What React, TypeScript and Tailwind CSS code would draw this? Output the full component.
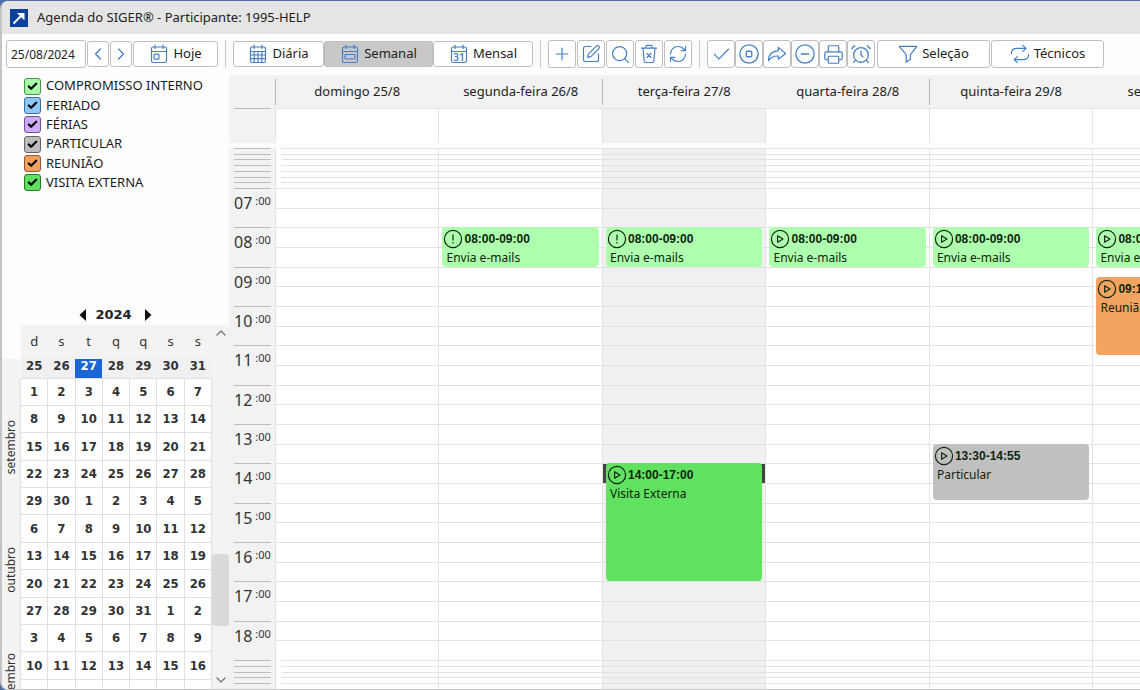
import type { ReactNode } from "react";
import { useState } from "react";
import clsx from "clsx";
import {
  AlarmClock,
  Check,
  ChevronDown,
  ChevronLeft,
  ChevronRight,
  ChevronUp,
  CircleMinus,
  CircleStop,
  Plus,
  Printer,
  RefreshCw,
  Search,
  SquarePen,
} from "lucide-react";

const FIRST_HOUR = 7;
const LAST_HOUR = 19;

const categories = [
  { name: "COMPROMISSO INTERNO", color: "bg-[#a9fca9] border-[#4c8f4c]" },
  { name: "FERIADO", color: "bg-[#8cc8fb] border-[#3c6e96]" },
  { name: "FÉRIAS", color: "bg-[#cdabfa] border-[#6f5296]" },
  { name: "PARTICULAR", color: "bg-[#bdbdbd] border-[#666666]" },
  { name: "REUNIÃO", color: "bg-[#f2a060] border-[#8f5a2c]" },
  { name: "VISITA EXTERNA", color: "bg-[#5fe060] border-[#2a7a2b]" },
];

const weekDays = ["d", "s", "t", "q", "q", "s", "s"];

const weeks = [
  [1, 2, 3, 4, 5, 6, 7],
  [8, 9, 10, 11, 12, 13, 14],
  [15, 16, 17, 18, 19, 20, 21],
  [22, 23, 24, 25, 26, 27, 28],
  [29, 30, 1, 2, 3, 4, 5],
  [6, 7, 8, 9, 10, 11, 12],
  [13, 14, 15, 16, 17, 18, 19],
  [20, 21, 22, 23, 24, 25, 26],
  [27, 28, 29, 30, 31, 1, 2],
  [3, 4, 5, 6, 7, 8, 9],
  [10, 11, 12, 13, 14, 15, 16],
];

type Appointment = {
  start: number;
  end: number;
  time: string;
  title: string;
  icon: "alert" | "play";
  color: string;
  selected?: boolean;
};

type Day = {
  label: string;
  divider?: boolean;
  today?: boolean;
  items: Appointment[];
};

function email(icon: "alert" | "play"): Appointment {
  return {
    start: 8,
    end: 9,
    time: "08:00-09:00",
    title: "Envia e-mails",
    icon,
    color: "bg-[#aeffae]",
  };
}

const days: Day[] = [
  { label: "domingo 25/8", divider: true, items: [] },
  { label: "segunda-feira 26/8", items: [email("alert")] },
  {
    label: "terça-feira 27/8",
    divider: true,
    today: true,
    items: [
      email("alert"),
      {
        start: 14,
        end: 17,
        time: "14:00-17:00",
        title: "Visita Externa",
        icon: "play",
        color: "bg-[#60e160]",
        selected: true,
      },
    ],
  },
  { label: "quarta-feira 28/8", items: [email("play")] },
  {
    label: "quinta-feira 29/8",
    divider: true,
    items: [
      email("play"),
      {
        start: 13.5,
        end: 14.92,
        time: "13:30-14:55",
        title: "Particular",
        icon: "play",
        color: "bg-[#c0c0c0]",
      },
    ],
  },
  {
    label: "sexta-feira 30/8",
    items: [
      email("play"),
      {
        start: 9.25,
        end: 11.25,
        time: "09:15-11:15",
        title: "Reunião",
        icon: "play",
        color: "bg-[#f4a460]",
      },
    ],
  },
];

function Glyph({ size = 20, children }: { size?: number; children: ReactNode }) {
  return (
    <svg
      width={size}
      height={size}
      viewBox="0 0 20 20"
      fill="none"
      stroke="currentColor"
      strokeWidth="1.2"
      strokeLinecap="round"
      strokeLinejoin="round"
      aria-hidden="true"
    >
      {children}
    </svg>
  );
}

function CalendarFrame({ children }: { children: ReactNode }) {
  return (
    <Glyph>
      <rect x="2.5" y="3" width="15" height="15.5" rx="1.8" />
      <path d="M2.5 7.5h15M6 1.2v3.3M14 1.2v3.3" />
      {children}
    </Glyph>
  );
}

function TodayIcon() {
  return (
    <CalendarFrame>
      <rect x="5" y="10.2" width="5" height="5" rx="1" />
    </CalendarFrame>
  );
}

function DayIcon() {
  return (
    <CalendarFrame>
      <path d="M6.2 7.5v11M10 7.5v11M13.8 7.5v11M2.5 11h15M2.5 14.7h15" />
    </CalendarFrame>
  );
}

function WeekIcon() {
  return (
    <CalendarFrame>
      <rect x="5" y="10.5" width="10" height="4.5" rx="0.8" />
    </CalendarFrame>
  );
}

function MonthIcon() {
  return (
    <CalendarFrame>
      <text
        x="10"
        y="16.7"
        textAnchor="middle"
        fontSize="10"
        fontFamily="Noto Sans, sans-serif"
        fill="currentColor"
        stroke="none"
        fontWeight="600"
      >
        31
      </text>
    </CalendarFrame>
  );
}

function DeleteIcon() {
  return (
    <Glyph>
      <path d="M2.5 4.2h15M7 4V2.3c0-.6.4-1 1-1h4c.6 0 1 .4 1 1V4M4 4.2l1.2 13c.1.8.6 1.3 1.4 1.3h6.8c.8 0 1.3-.5 1.4-1.3L16 4.2" />
      <path d="M8 9.5l4 4M12 9.5l-4 4" />
    </Glyph>
  );
}

function ForwardIcon() {
  return (
    <Glyph>
      <path d="M11.3 3.4L18.6 9.5L11.3 15.2V12C7.2 11.8 3.8 13.2 1.6 16.8C1.3 10.8 5 7 11.3 6.8Z" />
    </Glyph>
  );
}

function FilterIcon() {
  return (
    <Glyph>
      <path d="M1.2 2.4h17.6L12.4 10.6v4.6l-4.2 3V10.6Z" />
    </Glyph>
  );
}

function SwapIcon() {
  return (
    <Glyph>
      <path d="M1.4 9.6C1.4 6 3.8 4.4 7 4.4h8.6M12.8 1.4L16 4.4L12.8 7.4" />
      <path d="M18.6 10.4c0 3.4-2.4 5.2-5.6 5.2H4.4M7.4 12.6L4.2 15.6L7.4 18.6" />
    </Glyph>
  );
}

function ToolButton({
  label,
  children,
}: {
  label: string;
  children: ReactNode;
}) {
  return (
    <button
      type="button"
      aria-label={label}
      title={label}
      className="flex h-7 w-7 items-center justify-center rounded-[3px] border border-[#bfbfbf] bg-white text-[#457fc4]"
    >
      {children}
    </button>
  );
}

function TextButton({
  icon,
  className,
  children,
  ...props
}: {
  icon: ReactNode;
  className: string;
  children: ReactNode;
  onClick?: () => void;
  "aria-pressed"?: boolean;
}) {
  return (
    <button
      type="button"
      className={clsx(
        "flex shrink-0 items-center justify-center gap-1 rounded-[3px] border border-[#bfbfbf] text-[#222]",
        className,
      )}
      {...props}
    >
      <span className="text-[#457fc4]">{icon}</span>
      {children}
    </button>
  );
}

function Separator() {
  return <div className="mx-[7px] h-7 w-px bg-[#c9c9c9]" />;
}

function Toolbar() {
  const [view, setView] = useState("Semanal");

  const views = [
    { name: "Diária", icon: <DayIcon />, width: "w-[91px]" },
    { name: "Semanal", icon: <WeekIcon />, width: "w-[109px]" },
    { name: "Mensal", icon: <MonthIcon />, width: "w-[100px]" },
  ];

  return (
    <div className="flex h-[41px] shrink-0 items-center bg-[#fdfdfd] pb-px pl-1 text-[13px]">
      <input
        aria-label="Data"
        defaultValue="25/08/2024"
        className="h-7 w-20 rounded-[3px] border border-[#bfbfbf] bg-white px-1 text-[12px] text-[#222]"
      />
      <button
        type="button"
        aria-label="Anterior"
        className="ml-px flex h-[26px] w-[22px] items-center justify-center rounded-[3px] border border-[#bfbfbf] bg-white text-[#457fc4]"
      >
        <ChevronLeft size={20} strokeWidth={1.5} className="shrink-0" />
      </button>
      <button
        type="button"
        aria-label="Próximo"
        className="mx-px flex h-[26px] w-[22px] items-center justify-center rounded-[3px] border border-[#bfbfbf] bg-white text-[#457fc4]"
      >
        <ChevronRight size={20} strokeWidth={1.5} className="shrink-0" />
      </button>
      <TextButton icon={<TodayIcon />} className="h-[26px] w-[85px] bg-white">
        Hoje
      </TextButton>
      <Separator />
      {views.map((v) => (
        <TextButton
          key={v.name}
          icon={v.icon}
          aria-pressed={v.name === view}
          onClick={() => setView(v.name)}
          className={clsx(
            "h-[26px]",
            v.width,
            v.name === view ? "bg-[#c8c8c8]" : "bg-white",
          )}
        >
          {v.name}
        </TextButton>
      ))}
      <Separator />
      <div className="flex gap-px">
        <ToolButton label="Incluir">
          <Plus size={20} strokeWidth={1.4} />
        </ToolButton>
        <ToolButton label="Alterar">
          <SquarePen size={20} strokeWidth={1.4} />
        </ToolButton>
        <ToolButton label="Consultar">
          <Search size={21} strokeWidth={1.4} />
        </ToolButton>
        <ToolButton label="Excluir">
          <DeleteIcon />
        </ToolButton>
        <ToolButton label="Atualizar">
          <RefreshCw size={20} strokeWidth={1.4} />
        </ToolButton>
      </div>
      <Separator />
      <div className="flex">
        <ToolButton label="Confirmar">
          <Check size={21} strokeWidth={1.4} />
        </ToolButton>
        <ToolButton label="Encerrar">
          <CircleStop size={22} strokeWidth={1.4} />
        </ToolButton>
        <ToolButton label="Encaminhar">
          <ForwardIcon />
        </ToolButton>
        <ToolButton label="Cancelar">
          <CircleMinus size={22} strokeWidth={1.4} />
        </ToolButton>
        <ToolButton label="Imprimir">
          <Printer size={21} strokeWidth={1.4} />
        </ToolButton>
        <ToolButton label="Lembrete">
          <AlarmClock size={22} strokeWidth={1.4} />
        </ToolButton>
      </div>
      <div className="ml-0.5 flex gap-px">
        <TextButton icon={<FilterIcon />} className="h-7 w-[113px] bg-white">
          Seleção
        </TextButton>
        <TextButton icon={<SwapIcon />} className="h-7 w-[113px] bg-white">
          Técnicos
        </TextButton>
      </div>
    </div>
  );
}

function CategoryFilter() {
  return (
    <div className="ml-[22px] mt-0.5 flex h-[115px] flex-col justify-between">
      {categories.map((c) => (
        <label
          key={c.name}
          className="flex h-[18px] items-center gap-[5px] whitespace-nowrap text-[13px] text-[#1a1a1a]"
        >
          <span className="relative flex">
            <input
              type="checkbox"
              defaultChecked
              className={clsx(
                "peer h-[17px] w-[17px] appearance-none rounded-[3px] border",
                c.color,
              )}
            />
            <Check
              size={11}
              strokeWidth={5}
              className="pointer-events-none absolute left-[3px] top-[3px] hidden text-black peer-checked:block"
            />
          </span>
          {c.name}
        </label>
      ))}
    </div>
  );
}

function YearCalendar() {
  return (
    <div className="flex min-h-0 flex-1 flex-col overflow-hidden">
      <div className="flex h-5 shrink-0 items-center justify-center gap-2 font-['DejaVu_Sans'] text-[13px] font-bold text-[#222]">
        <button type="button" aria-label="Ano anterior">
          <svg width="8" height="12" viewBox="0 0 8 12" aria-hidden="true">
            <path d="M7 0v12L0.5 6Z" fill="#111" />
          </svg>
        </button>
        2024
        <button type="button" aria-label="Próximo ano" className="ml-1">
          <svg width="8" height="12" viewBox="0 0 8 12" aria-hidden="true">
            <path d="M1 0v12L7.5 6Z" fill="#111" />
          </svg>
        </button>
      </div>
      <div className="flex min-h-0 flex-1">
        <div className="mt-[34px] flex w-[18px] shrink-0 flex-col bg-[#f3f3f3] text-[12px] leading-[18px] text-[#333]">
          <div className="flex h-44 shrink-0 items-center">
            <span className="rotate-180 [writing-mode:vertical-rl]">
              setembro
            </span>
          </div>
          <div className="flex h-[70px] shrink-0 items-center">
            <span className="rotate-180 [writing-mode:vertical-rl]">
              outubro
            </span>
          </div>
          <div className="flex pt-12">
            <span className="rotate-180 [writing-mode:vertical-rl]">
              novembro
            </span>
          </div>
        </div>
        <table className="h-[382px] w-[192px] shrink-0 table-fixed border-collapse text-center text-[#333]">
          <thead className="bg-[#f3f3f3] text-[13px]">
            <tr className="h-[34px]">
              {weekDays.map((d, i) => (
                <th key={i} className="p-0 font-normal">
                  {d}
                </th>
              ))}
            </tr>
          </thead>
          <tbody className="font-['DejaVu_Sans_Condensed','DejaVu_Sans'] text-[13px] font-bold">
            <tr className="h-[19px] bg-[#f0f0f0] leading-[13px]">
              {[25, 26, 27, 28, 29, 30, 31].map((d) => (
                <td
                  key={d}
                  className={clsx(
                    "p-0 align-top",
                    d === 27 && "bg-[#1a66d6] text-white",
                  )}
                >
                  {d}
                </td>
              ))}
            </tr>
            {weeks.map((week, i) => (
              <tr key={i}>
                {week.map((d) => (
                  <td key={d} className="border border-[#e0e0e0] bg-white p-0">
                    {d}
                  </td>
                ))}
              </tr>
            ))}
            <tr>
              {weekDays.map((_, i) => (
                <td key={i} className="border border-[#e0e0e0] bg-white p-0">
                  &nbsp;
                </td>
              ))}
            </tr>
          </tbody>
        </table>
        <div className="flex flex-1 flex-col items-center bg-[#f3f3f3] text-[#777]">
          <ChevronUp size={16} strokeWidth={2} className="shrink-0" />
          <div className="mt-[213px] h-[72px] w-full rounded-[3px] bg-[#dadada]" />
          <ChevronDown size={16} strokeWidth={2} className="mb-px mt-auto shrink-0" />
        </div>
      </div>
    </div>
  );
}

function Sidebar() {
  return (
    <aside className="flex w-[227px] shrink-0 flex-col bg-[#fdfdfd]">
      <CategoryFilter />
      <div className="h-[113px] shrink-0" />
      <YearCalendar />
    </aside>
  );
}

function StatusIcon({ icon }: { icon: "alert" | "play" }) {
  return (
    <svg
      width="20"
      height="20"
      viewBox="0 0 20 20"
      fill="none"
      stroke="currentColor"
      strokeWidth="1.2"
      strokeLinejoin="round"
      className="shrink-0"
      aria-hidden="true"
    >
      <circle cx="10" cy="10" r="8.6" />
      {icon === "play" ? (
        <path d="M7.6 6.8v6.4L13 10Z" />
      ) : (
        <path d="M10 5.5v6M10 13v1.6" />
      )}
    </svg>
  );
}

function AppointmentCard({ item }: { item: Appointment }) {
  const span = LAST_HOUR - FIRST_HOUR;

  return (
    <div
      className="absolute inset-x-0 px-[3px]"
      style={{
        top: `${((item.start - FIRST_HOUR) / span) * 100}%`,
        height: `${((item.end - item.start) / span) * 100}%`,
      }}
    >
      {item.selected && (
        <div className="absolute inset-x-0 top-px h-[19px] bg-[#444]" />
      )}
      <div
        className={clsx(
          "relative h-full overflow-hidden rounded-[4px] text-[12px] text-[#0d260d]",
          item.color,
        )}
      >
        <div className="flex h-6 items-center gap-px pl-px font-['Liberation_Sans'] font-bold">
          <StatusIcon icon={item.icon} />
          {item.time}
        </div>
        <div className="pl-1 leading-[14px]">{item.title}</div>
      </div>
    </div>
  );
}

function Lines({
  count,
  className,
  line,
}: {
  count: number;
  className: string;
  line: string;
}) {
  return (
    <div className={clsx("flex flex-col", className)}>
      {Array.from({ length: count }, (_, i) => (
        <div key={i} className={clsx("flex-1 border-t", line)} />
      ))}
    </div>
  );
}

function HourRuler() {
  const hours = Array.from(
    { length: LAST_HOUR - FIRST_HOUR },
    (_, i) => FIRST_HOUR + i,
  );

  return (
    <div className="flex w-[46px] shrink-0 flex-col bg-[#f2f2f2] pl-[5px] pr-1">
      <Lines count={7} className="h-10 shrink-0" line="border-[#bdbdbd]" />
      <div className="flex min-h-0 flex-1 flex-col">
        {hours.map((h) => (
          <div
            key={h}
            className="flex flex-1 items-start gap-[3px] border-t border-[#bdbdbd] pt-1 text-[#333]"
          >
            <span className="text-[16px] leading-5">
              {String(h).padStart(2, "0")}
            </span>
            <span className="text-[11px] leading-4">:00</span>
          </div>
        ))}
      </div>
      <Lines count={5} className="h-[29px] shrink-0" line="border-[#bdbdbd]" />
    </div>
  );
}

function WeekView() {
  return (
    <main className="flex min-w-0 flex-1 flex-col overflow-hidden">
      <div className="flex h-[34px] shrink-0 bg-[#f2f2f2]">
        <div className="flex w-[46px] shrink-0 items-end pl-[5px] pr-1">
          <div className="h-px w-full bg-[#bdbdbd]" />
        </div>
        <div className="flex min-w-0 flex-1 border-b border-[#e4e4e4]">
          {days.map((d) => (
            <div
              key={d.label}
              className="flex shrink-0 basis-[18.9%] items-center text-[13px] text-[#222]"
            >
              <div
                className={clsx(
                  "h-[26px] w-px",
                  d.divider ? "bg-[#b8b8b8]" : "bg-transparent",
                )}
              />
              <div className="flex-1 whitespace-nowrap text-center">
                {d.label}
              </div>
            </div>
          ))}
        </div>
      </div>
      <div className="flex h-[34px] shrink-0">
        <div className="w-[46px] shrink-0 bg-[#f2f2f2]" />
        <div className="flex min-w-0 flex-1">
          {days.map((d) => (
            <div
              key={d.label}
              className={clsx(
                "shrink-0 basis-[18.9%] border-l border-[#e4e4e4]",
                d.today ? "bg-[#f0f0f0]" : "bg-white",
              )}
            />
          ))}
        </div>
      </div>
      <div className="flex min-h-0 flex-1 pt-[5px]">
        <HourRuler />
        <div className="flex min-w-0 flex-1">
          {days.map((d, i) => (
            <div
              key={d.label}
              className={clsx(
                "flex shrink-0 basis-[18.9%] flex-col border-l border-[#e4e4e4]",
                d.today ? "bg-[#f0f0f0]" : "bg-white",
              )}
            >
              <Lines
                count={7}
                className={clsx("h-10 shrink-0", i === 0 && "ml-[5px]")}
                line="border-[#e2e2e2]"
              />
              <div className="relative flex min-h-0 flex-1">
                <Lines count={24} className="flex-1" line="border-[#e2e2e2]" />
                {d.items.map((item) => (
                  <AppointmentCard key={item.start} item={item} />
                ))}
              </div>
              <Lines
                count={5}
                className={clsx("h-[29px] shrink-0", i === 0 && "ml-[5px]")}
                line="border-[#e2e2e2]"
              />
            </div>
          ))}
        </div>
      </div>
    </main>
  );
}

export default function App() {
  return (
    <div className="h-screen overflow-hidden bg-[#4f6fa6] pt-px font-['Noto_Sans',sans-serif]">
      <div className="flex h-full flex-col overflow-hidden rounded-l-lg border-b border-l-2 border-[#c4c4c4] bg-[#fdfdfd]">
        <header className="flex h-[33px] shrink-0 items-center gap-[9px] bg-[#e5e5e5] pl-2 text-[13px] text-[#222]">
          <svg width="18" height="18" viewBox="0 0 18 18" aria-hidden="true">
            <rect width="18" height="18" fill="#0b3f9c" />
            <path d="M3.5 14.5L12 6" fill="none" stroke="#fff" strokeWidth="2" />
            <path d="M7 4h7.5v7.5Z" fill="#fff" />
          </svg>
          <h1>Agenda do SIGER® - Participante: 1995-HELP</h1>
        </header>
        <Toolbar />
        <div className="flex min-h-0 flex-1">
          <Sidebar />
          <WeekView />
        </div>
      </div>
    </div>
  );
}
